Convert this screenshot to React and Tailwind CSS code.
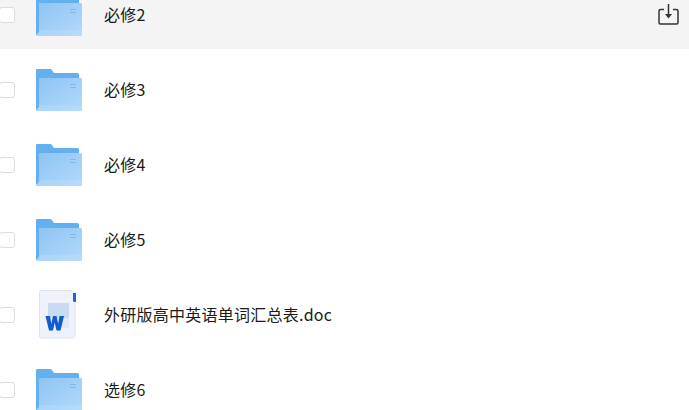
const FolderIcon = () => (
  <svg width="46" height="46" viewBox="0 0 46 46" className="block">
    <defs>
      <linearGradient id="folderFront" x1="0" y1="0" x2="1" y2="1">
        <stop offset="0" stopColor="#8cc4f3" />
        <stop offset="1" stopColor="#b4d9fb" />
      </linearGradient>
    </defs>
    <path d="M0 3.500A1.500 1.500 0 0 1 1.500 2H15L18 6H41.500A1.500 1.500 0 0 1 43 7.500V40H0Z" fill="#64afee" />
    <path d="M0 40L3 37V11H44.500A1.500 1.500 0 0 1 46 12.500V42.500A1.500 1.500 0 0 1 44.500 44H1.500A1.500 1.500 0 0 1 0 42.500Z" fill="url(#folderFront)" />
    <path d="M0 42.500V39H3V38H46V42.500A1.500 1.500 0 0 1 44.500 44H1.500A1.500 1.500 0 0 1 0 42.500Z" fill="#c0dffb" opacity="0.35" />
    <path d="M0 3.500A1.500 1.500 0 0 1 1.500 2H3V40L0 43Z" fill="#64afee" />
    <rect x="34" y="17" width="6" height="1" fill="#7fb9ec" />
    <rect x="34" y="20" width="6" height="1" fill="#7fb9ec" />
  </svg>
)

const WordIcon = () => (
  <svg width="46" height="50" viewBox="0 0 46 50" className="block">
    <path d="M5.500 0.500H35L39 4V46A2 2 0 0 1 37 48H5.500A2 2 0 0 1 3.500 46V2.500A2 2 0 0 1 5.500 0.500Z" fill="#eef3fb" stroke="#dbe3f0" />
    <path d="M37 3H40V12H38.500A1.500 1.500 0 0 1 37 10.500Z" fill="#1f63d6" />
    <rect x="12" y="13" width="21" height="15" fill="#c9daf5" />
    <rect x="12" y="28" width="21" height="10" fill="#e0e9f8" />
    <path d="M9.500 26H14L15.300 34L17 26H20.500L22.200 34L23.500 26H28L24.500 40.500H20.500L18.750 32.500L17 40.500H13Z" fill="#0f5bd0" />
  </svg>
)

const SaveIcon = () => (
  <svg width="24" height="24" viewBox="0 0 24 24" fill="none" stroke="#333333" strokeWidth="1.500" className="block">
    <path d="M8 6.500H4.500A1.500 1.500 0 0 0 3 8V19.500A1.500 1.500 0 0 0 4.500 21H20.500A1.500 1.500 0 0 0 22 19.500V8A1.500 1.500 0 0 0 20.500 6.500H17" />
    <path d="M12.500 1V12" />
    <path d="M9 11H16L12.500 15.500Z" fill="#333333" stroke="none" />
  </svg>
)

const rows = [
  { name: '必修2', type: 'folder', active: true },
  { name: '必修3', type: 'folder' },
  { name: '必修4', type: 'folder' },
  { name: '必修5', type: 'folder' },
  { name: '外研版高中英语单词汇总表.doc', type: 'word' },
  { name: '选修6', type: 'folder' }
]

export default function App() {
  return (
    <div className="h-[410px] w-[689px] overflow-hidden bg-white font-['Noto_Sans_CJK_SC','Noto_Sans',sans-serif]">
      <div className="-mt-[26px]">
        {rows.map((row) => (
          <div
            key={row.name}
            className={`flex h-[75px] items-center pt-[7px] ${row.active ? 'bg-[#f4f4f4]' : 'bg-white'}`}
          >
            <div className="-ml-px h-4 w-4 shrink-0 rounded-[3px] border border-[#dcdcdc] bg-white" />
            <div className="ml-[21px] w-[46px] shrink-0">
              {row.type === 'folder' ? <FolderIcon /> : <WordIcon />}
            </div>
            <div className="ml-[22px] flex-1 pb-[2px] text-base tracking-[0.25px] text-[#1a1a1a]">{row.name}</div>
            {row.active && (
              <div className="mr-[9px] shrink-0">
                <SaveIcon />
              </div>
            )}
          </div>
        ))}
      </div>
    </div>
  )
}
